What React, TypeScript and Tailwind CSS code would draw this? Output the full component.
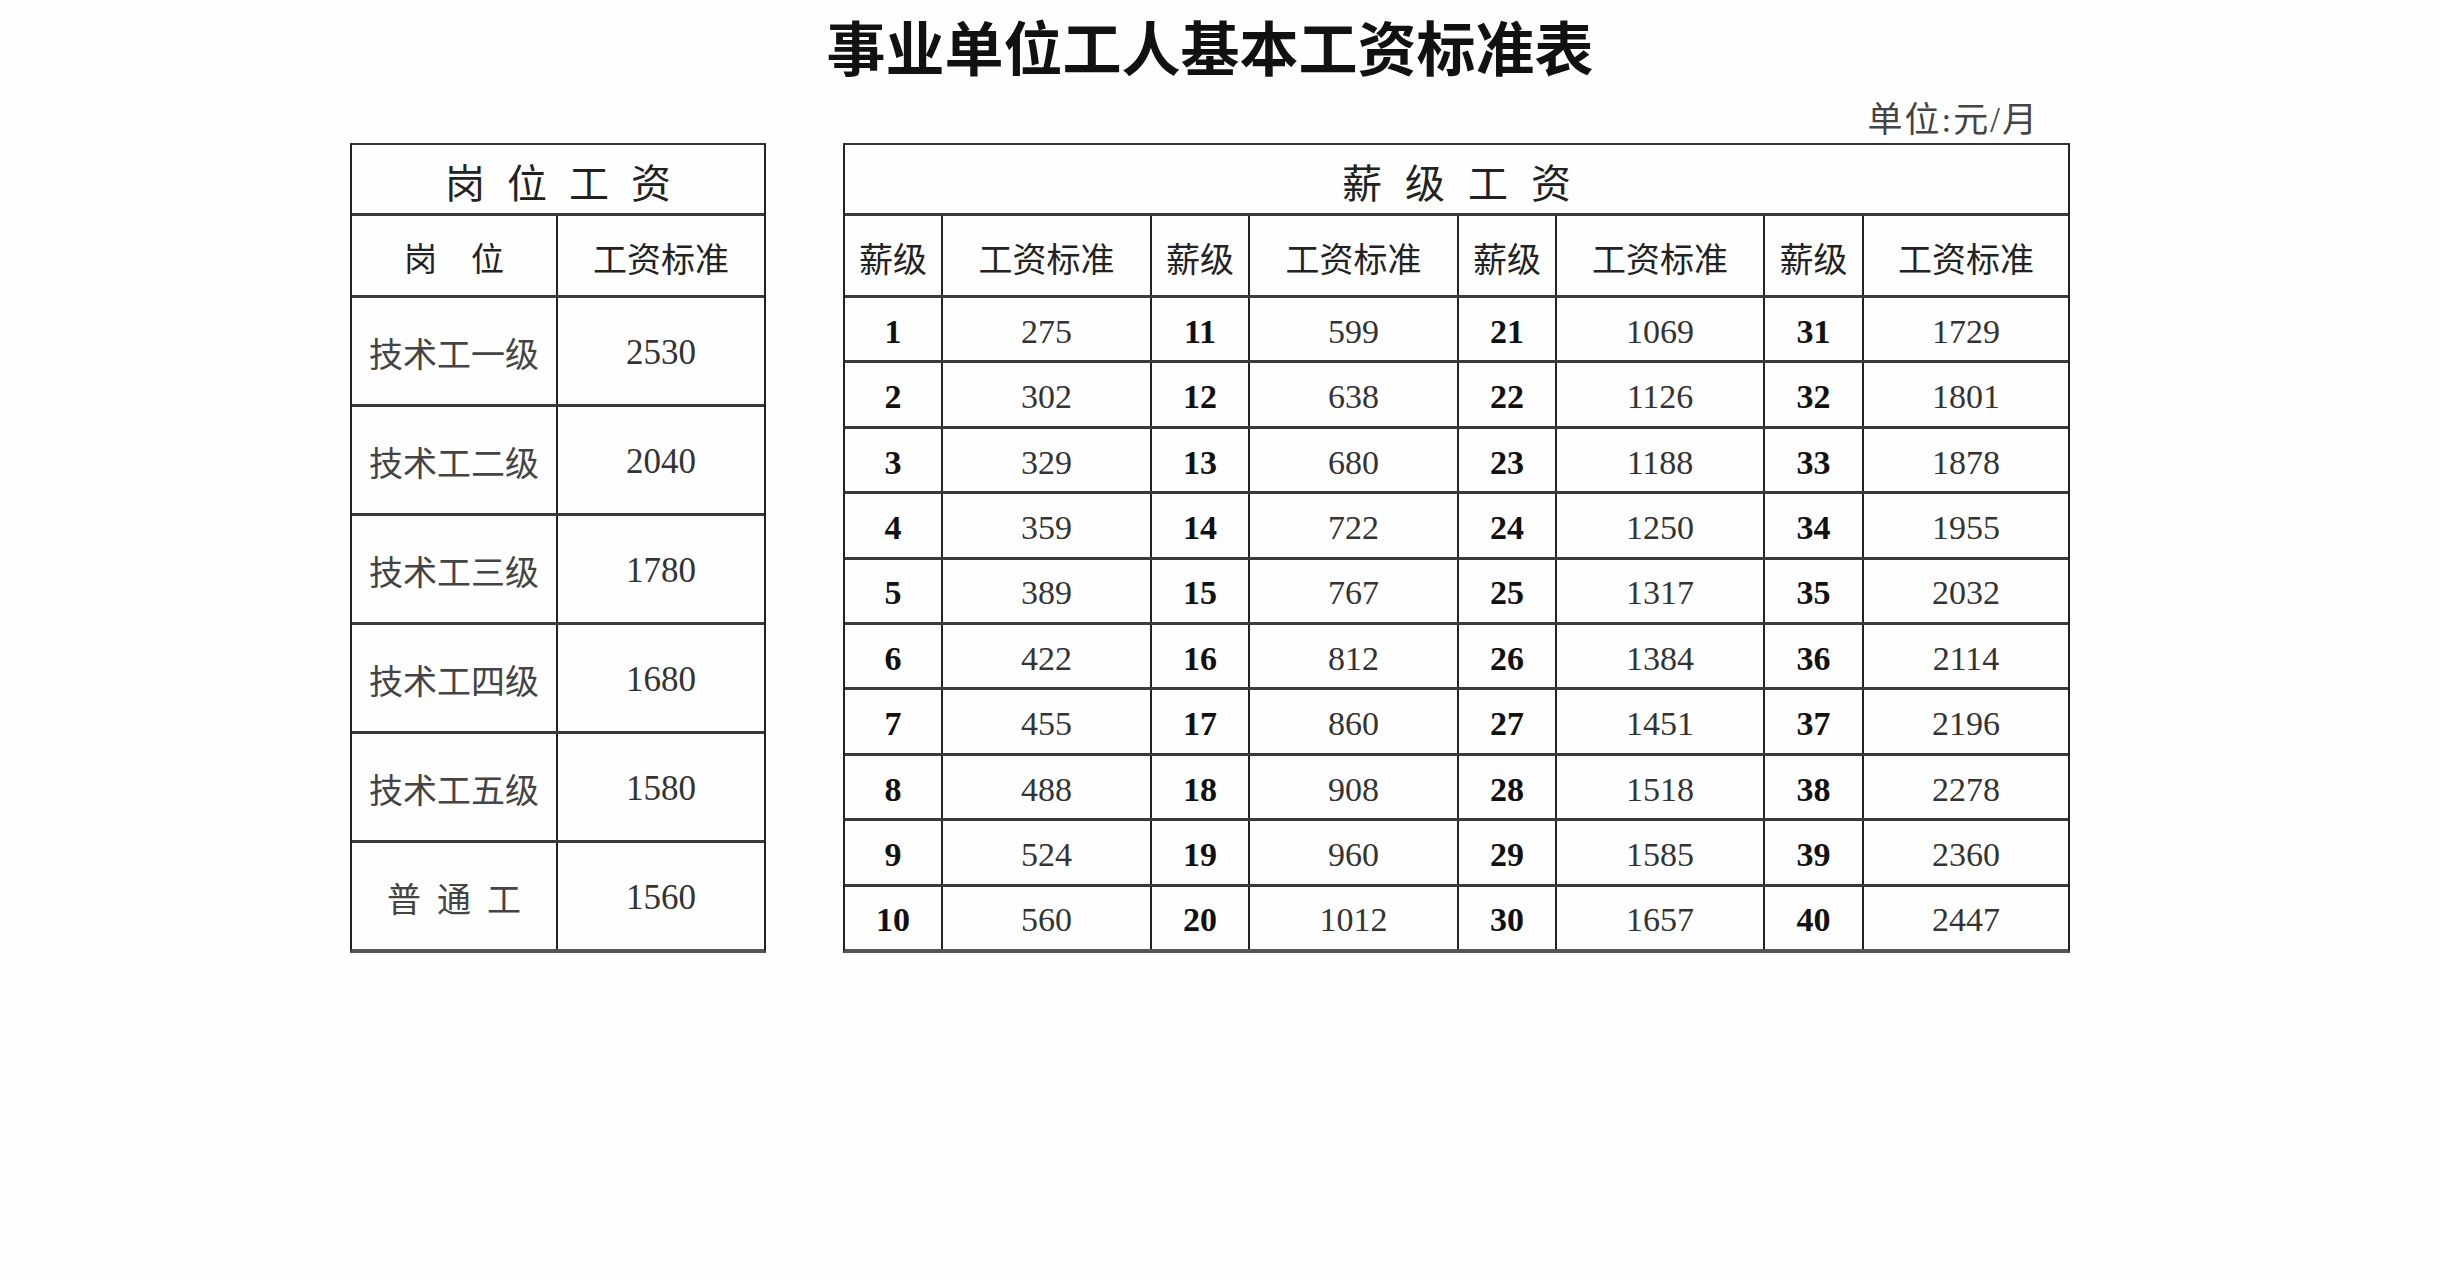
import React from "react";

const CJK = "font-['Noto_Sans_CJK_SC',sans-serif]";
const SERIF = "font-['Liberation_Serif','Noto_Sans_CJK_SC',serif]";

const leftRows: [string, string][] = [
  ["技术工一级", "2530"],
  ["技术工二级", "2040"],
  ["技术工三级", "1780"],
  ["技术工四级", "1680"],
  ["技术工五级", "1580"],
  ["普通工", "1560"],
];

const rightRows: number[][] = [
  [1, 275, 11, 599, 21, 1069, 31, 1729],
  [2, 302, 12, 638, 22, 1126, 32, 1801],
  [3, 329, 13, 680, 23, 1188, 33, 1878],
  [4, 359, 14, 722, 24, 1250, 34, 1955],
  [5, 389, 15, 767, 25, 1317, 35, 2032],
  [6, 422, 16, 812, 26, 1384, 36, 2114],
  [7, 455, 17, 860, 27, 1451, 37, 2196],
  [8, 488, 18, 908, 28, 1518, 38, 2278],
  [9, 524, 19, 960, 29, 1585, 39, 2360],
  [10, 560, 20, 1012, 30, 1657, 40, 2447],
];

const RIGHT_COLS = "grid grid-cols-[98px_209px_98px_209px_98px_208px_99px_1fr]";

function Spaced({ text, gap }: { text: string; gap: string }) {
  return (
    <span className={`flex ${gap}`}>
      {text.split("").map((c, i) => (
        <span key={i}>{c}</span>
      ))}
    </span>
  );
}

function LeftTable() {
  return (
    <div className="flex h-[810px] w-[416px] flex-col border-x-2 border-t-2 border-b-[4px] border-x-[#222] border-t-[#333] border-b-[#555]">
      <div className={`flex h-[71px] shrink-0 items-center justify-center border-b-[3px] border-[#3a3a3a] pt-[3px] text-[40px] text-[#222] ${CJK}`}>
        <Spaced text="岗位工资" gap="gap-[22px]" />
      </div>
      <div className="grid h-[82px] shrink-0 grid-cols-[206px_1fr] border-b-[3px] border-[#3a3a3a]">
        <div className={`flex items-center justify-center border-r-2 border-[#222] pt-[4px] text-[33px] text-[#222] ${CJK}`}>
          <Spaced text="岗位" gap="gap-[34px]" />
        </div>
        <div className={`flex items-center justify-center pt-[4px] text-[34px] text-[#222] ${CJK}`}>工资标准</div>
      </div>
      <div className="flex flex-1 flex-col">
        {leftRows.map(([name, val], i) => (
          <div
            key={i}
            className={
              i < leftRows.length - 1
                ? "grid flex-1 grid-cols-[206px_1fr] border-b-[3px] border-[#3a3a3a]"
                : "grid flex-1 grid-cols-[206px_1fr]"
            }
          >
            <div className={`flex items-center justify-center border-r-2 border-[#222] pt-[3px] text-[34px] text-[#444] ${CJK}`}>
              {name === "普通工" ? <Spaced text={name} gap="gap-[16px]" /> : name}
            </div>
            <div className={`flex items-center justify-center pt-[4px] text-[35px] text-[#333] ${SERIF}`}>{val}</div>
          </div>
        ))}
      </div>
    </div>
  );
}

function RightTable() {
  const heads = ["薪级", "工资标准", "薪级", "工资标准", "薪级", "工资标准", "薪级", "工资标准"];
  return (
    <div className="flex h-[810px] w-[1227px] flex-col border-x-2 border-t-2 border-b-[4px] border-x-[#222] border-t-[#333] border-b-[#555]">
      <div className={`flex h-[71px] shrink-0 items-center justify-center border-b-[3px] border-[#3a3a3a] pt-[3px] text-[40px] text-[#222] ${CJK}`}>
        <Spaced text="薪级工资" gap="gap-[23px]" />
      </div>
      <div className={`${RIGHT_COLS} h-[82px] shrink-0 border-b-[3px] border-[#3a3a3a]`}>
        {heads.map((h, i) => (
          <div
            key={i}
            className={
              i < 7
                ? `flex items-center justify-center border-r-2 border-[#222] pt-[4px] text-[34px] text-[#222] ${CJK}`
                : `flex items-center justify-center pt-[4px] text-[34px] text-[#222] ${CJK}`
            }
          >
            {h}
          </div>
        ))}
      </div>
      <div className="flex flex-1 flex-col">
        {rightRows.map((row, r) => (
          <div
            key={r}
            className={
              r < rightRows.length - 1
                ? `${RIGHT_COLS} flex-1 border-b-[3px] border-[#3a3a3a]`
                : `${RIGHT_COLS} flex-1`
            }
          >
            {row.map((v, i) => {
              const bold = i % 2 === 0;
              let cls = "flex items-center justify-center pt-[4px] text-[34px] " + SERIF;
              cls += bold ? " font-bold text-[#111]" : " text-[#333]";
              if (i < 7) cls += " border-r-2 border-[#222]";
              return (
                <div key={i} className={cls}>
                  {v}
                </div>
              );
            })}
          </div>
        ))}
      </div>
    </div>
  );
}

export default function App() {
  return (
    <div className="h-[1280px] w-[2440px] overflow-hidden bg-[#fefefe]">
      <div className="ml-[350px] flex w-[1720px] flex-col">
        <div className={`flex h-[90px] items-center justify-center text-[59px] font-bold leading-none text-[#111] ${CJK}`}>
          事业单位工人基本工资标准表
        </div>
        <div className={`flex h-[53px] items-center justify-end pr-[31px] pt-[8px] text-[35px] leading-none tracking-[2px] text-[#444] ${SERIF}`}>
          单位:元/月
        </div>
        <div className="flex gap-[77px]">
          <LeftTable />
          <RightTable />
        </div>
      </div>
    </div>
  );
}
